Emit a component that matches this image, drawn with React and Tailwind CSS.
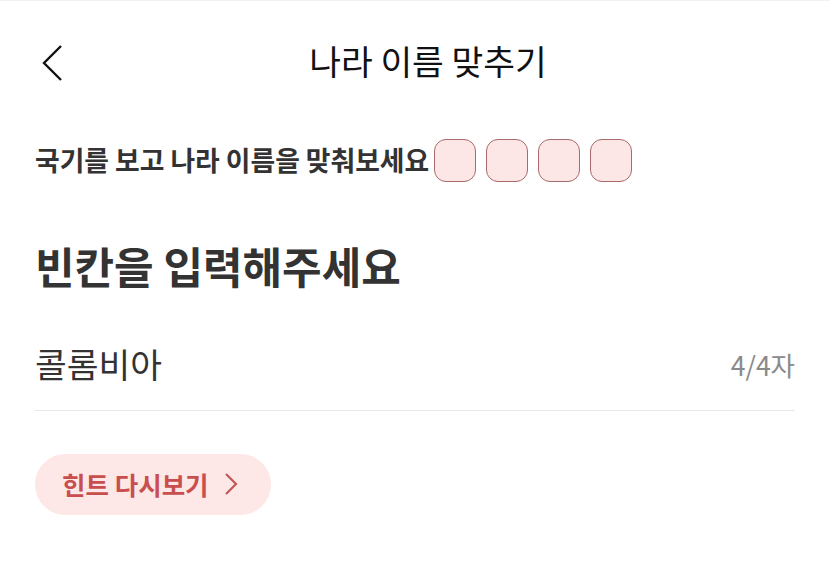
export default function App() {
  const slots = [0, 1, 2, 3];

  return (
    <div
      className="w-[830px] h-[586px] bg-white border-t border-[#f2f2f2] text-[#333]"
      style={{ fontFamily: '"Noto Sans CJK KR", "Noto Sans", sans-serif' }}
    >
      {/* header */}
      <div className="relative h-[118px] flex items-center justify-center">
        <button className="absolute left-[40px] top-[43px] w-[24px] h-[38px]">
          <svg width="24" height="38" viewBox="0 0 24 38" fill="none">
            <path d="M21 2 L4 19 L21 36" stroke="#111" strokeWidth="2.4" />
          </svg>
        </button>
        <h1 className="text-[34.5px] leading-none text-[#111] ml-[26px]">나라 이름 맞추기</h1>
      </div>

      <div className="px-[35px]">
        <div className="flex items-center mt-[20px]">
          <p className="text-[26.8px] font-bold leading-none">
            국기를 보고 나라 이름을 맞춰보세요
          </p>
          <div className="flex gap-[10px] ml-[5px]">
            {slots.map((i) => (
              <div
                key={i}
                className="w-[42px] h-[43px] rounded-[12px] border-[1.5px] border-[#a86a6a] bg-[#fde6e6]"
              />
            ))}
          </div>
        </div>

        <h2 className="mt-[62px] text-[43px] font-bold leading-none">
          빈칸을 입력해주세요
        </h2>

        <div className="mt-[59px] flex items-center justify-between pb-[29px] border-b border-[#e8e8e8]">
          <span className="text-[34.5px] leading-none">콜롬비아</span>
          <span className="text-[26.5px] leading-none text-[#8a8a8a] mt-[4px]">4/4자</span>
        </div>

        <button className="mt-[43px] h-[61px] w-[236px] rounded-full bg-[#fde7e7] flex items-center pl-[27px]">
          <span className="text-[25.5px] font-bold leading-none text-[#c94f4f]">
            힌트 다시보기
          </span>
          <svg className="ml-[15px]" width="14" height="24" viewBox="0 0 14 24" fill="none">
            <path d="M2 2 L12 12 L2 22" stroke="#c05858" strokeWidth="2.2" />
          </svg>
        </button>
      </div>
    </div>
  );
}
